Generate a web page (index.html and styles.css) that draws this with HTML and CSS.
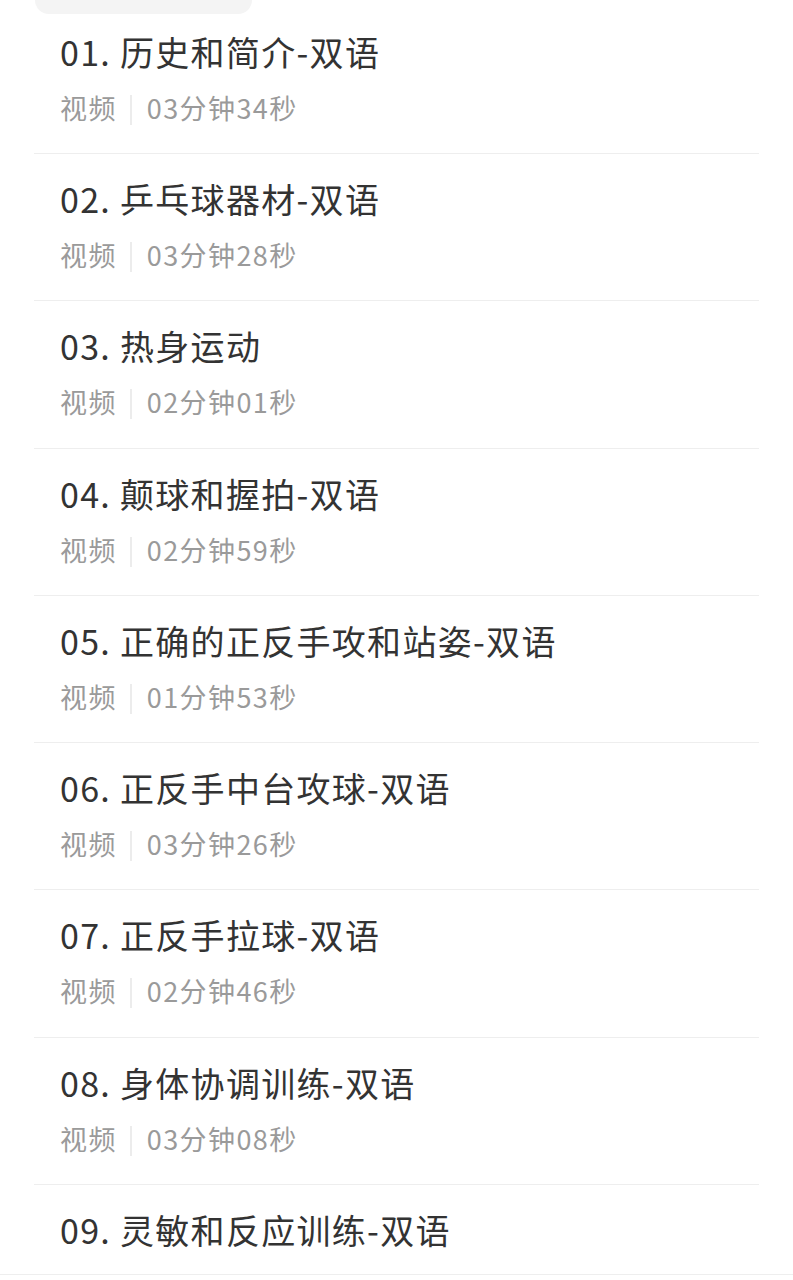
FILE: index.html
```html
<!DOCTYPE html>
<html lang="zh-CN">
<head>
<meta charset="utf-8">
<title>课程目录</title>
<link rel="stylesheet" href="styles.css">
</head>
<body>
<div class="page">
  <div class="tab-pill"></div>
  <ul class="lessons">
    <li class="lesson"><div class="title">01. 历史和简介-双语</div><div class="meta"><span>视频</span><i class="sep"></i><span>03分钟34秒</span></div></li>
    <li class="lesson"><div class="title">02. 乒乓球器材-双语</div><div class="meta"><span>视频</span><i class="sep"></i><span>03分钟28秒</span></div></li>
    <li class="lesson"><div class="title">03. 热身运动</div><div class="meta"><span>视频</span><i class="sep"></i><span>02分钟01秒</span></div></li>
    <li class="lesson"><div class="title">04. 颠球和握拍-双语</div><div class="meta"><span>视频</span><i class="sep"></i><span>02分钟59秒</span></div></li>
    <li class="lesson"><div class="title">05. 正确的正反手攻和站姿-双语</div><div class="meta"><span>视频</span><i class="sep"></i><span>01分钟53秒</span></div></li>
    <li class="lesson"><div class="title">06. 正反手中台攻球-双语</div><div class="meta"><span>视频</span><i class="sep"></i><span>03分钟26秒</span></div></li>
    <li class="lesson"><div class="title">07. 正反手拉球-双语</div><div class="meta"><span>视频</span><i class="sep"></i><span>02分钟46秒</span></div></li>
    <li class="lesson"><div class="title">08. 身体协调训练-双语</div><div class="meta"><span>视频</span><i class="sep"></i><span>03分钟08秒</span></div></li>
    <li class="lesson"><div class="title">09. 灵敏和反应训练-双语</div></li>
  </ul>
</div>
<div class="bottom-bar"></div>
</body>
</html>
```

FILE: styles.css
```css
html, body {
  margin: 0;
  padding: 0;
  background: #ffffff;
}
body {
  font-family: "Noto Sans CJK SC", "Noto Sans", sans-serif;
  overflow: hidden;
}
.page {
  padding: 0 34px;
}
.tab-pill {
  width: 217px;
  height: 14px;
  margin-left: 1px;
  background: #f4f4f4;
  border-radius: 0 0 24px 24px;
}
.lessons {
  list-style: none;
  margin: -7.3px 0 0 0;
  padding: 0;
}
.lesson {
  box-sizing: border-box;
  height: 147.3px;
  padding: 24px 0 0 26px;
  border-bottom: 1px solid #eeeeee;
}
.title {
  font-size: 34px;
  line-height: 42px;
  letter-spacing: 1.3px;
  color: #333333;
  white-space: nowrap;
}
.meta {
  display: flex;
  align-items: center;
  margin-top: 17px;
  height: 36px;
  font-size: 27px;
  line-height: 36px;
  letter-spacing: 1.4px;
  color: #9a9a9a;
}
.sep {
  display: block;
  width: 2px;
  height: 30px;
  margin: 4px 15px 0 13px;
  background: #ececec;
}
.bottom-bar {
  position: fixed;
  left: 0;
  right: 0;
  bottom: 0;
  height: 5px;
  background: #ffffff;
  border-top: 1px solid #eeeeee;
}
```
